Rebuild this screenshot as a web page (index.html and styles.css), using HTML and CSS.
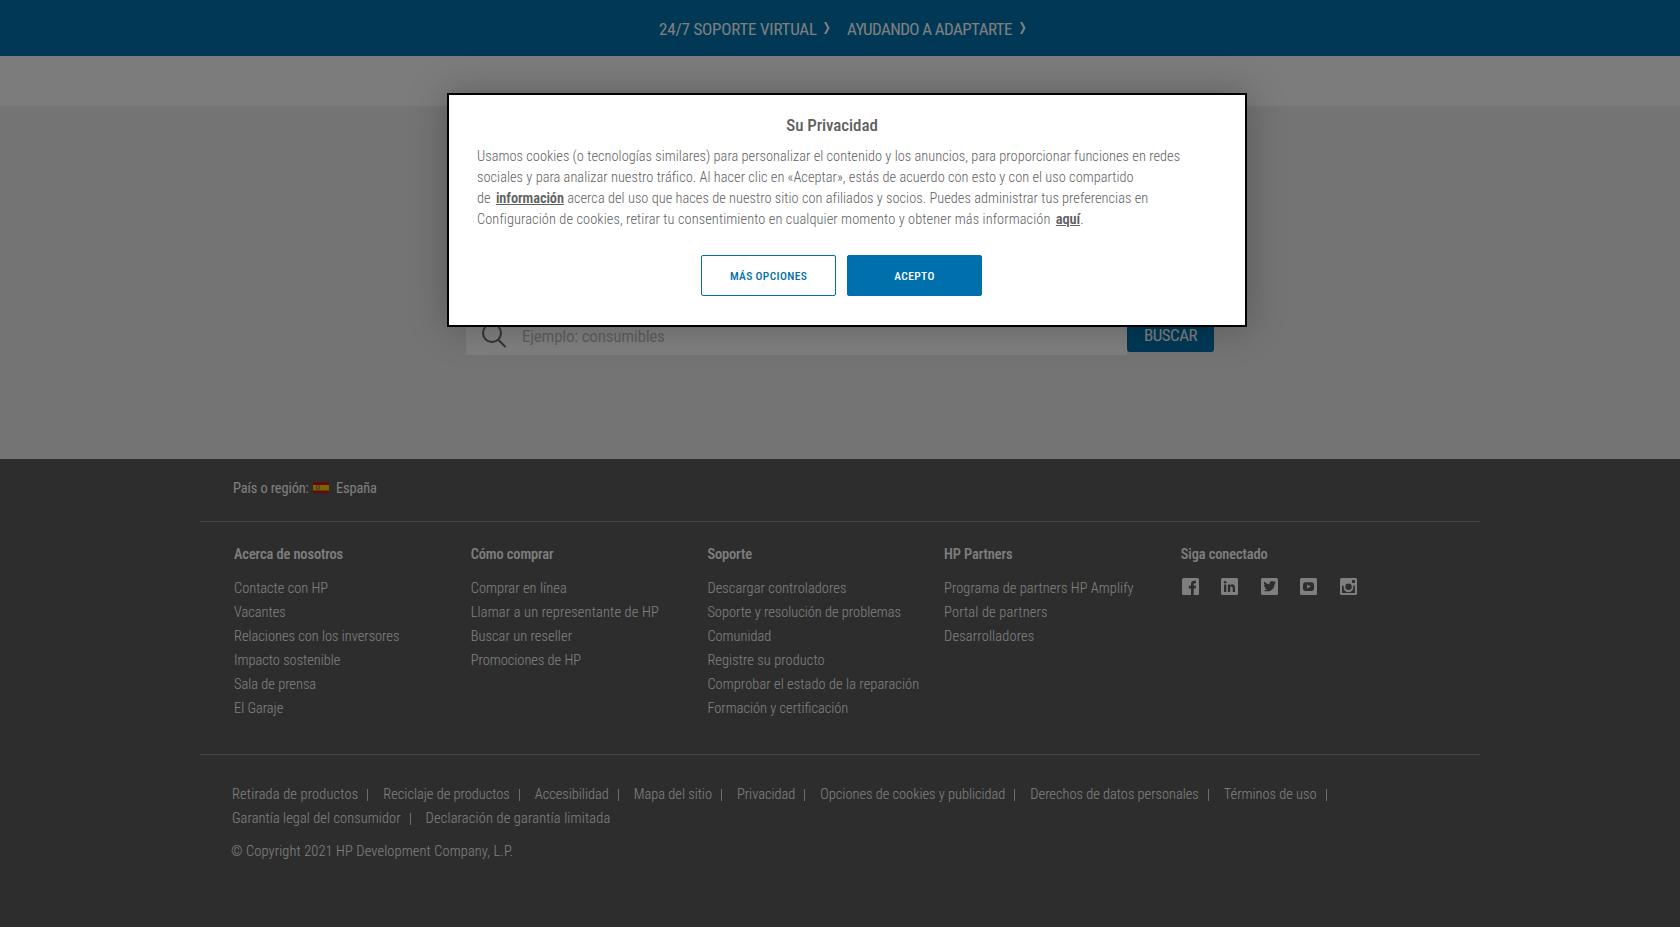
FILE: index.html
```html
<!DOCTYPE html>
<html lang="es">
<head>
<meta charset="utf-8">
<title>HP España</title>
<link rel="stylesheet" href="styles.css">
</head>
<body>
<div class="page">
  <div class="promo">
    <a class="promo-link p1">24/7 SOPORTE VIRTUAL</a>
    <svg class="chev" viewBox="0 0 6 12"><path d="M0 0h2.3L5.6 6 2.3 12H0l3.2-6z"/></svg>
    <a class="promo-link p2">AYUDANDO A ADAPTARTE</a>
    <svg class="chev" viewBox="0 0 6 12"><path d="M0 0h2.3L5.6 6 2.3 12H0l3.2-6z"/></svg>
  </div>
  <header class="header"></header>
  <main class="main">
    <div class="search">
      <div class="field">
        <svg class="lens" viewBox="0 0 26 26"><circle cx="11" cy="11" r="9"/><path d="M17 17.500l7.500 7.500"/></svg>
        <span class="hint">Ejemplo: consumibles</span>
      </div>
      <div class="go">BUSCAR</div>
    </div>
  </main>
  <footer class="footer">
    <div class="region">
      <span class="region-label">País o región:</span>
      <svg class="flag" viewBox="0 0 16 11"><rect width="16" height="11" rx="1" fill="#d0101c"/><rect y="3" width="16" height="5.500" fill="#e8d000"/><rect x="3" y="3.600" width="4" height="4" rx="1" fill="#c4683a"/><rect x="4.300" y="4.600" width="1.600" height="2" fill="#d8c8b0"/></svg>
      <span class="region-name">España</span>
    </div>
    <div class="columns">
      <div class="col">
        <h3 class="head">Acerca de nosotros</h3>
        <a>Contacte con HP</a><a>Vacantes</a><a>Relaciones con los inversores</a><a>Impacto sostenible</a><a>Sala de prensa</a><a>El Garaje</a>
      </div>
      <div class="col">
        <h3 class="head">Cómo comprar</h3>
        <a class="loose">Comprar en línea</a><a class="looser">Llamar a un representante de HP</a><a class="loose">Buscar un reseller</a><a>Promociones de HP</a>
      </div>
      <div class="col">
        <h3 class="head">Soporte</h3>
        <a class="loose">Descargar controladores</a><a>Soporte y resolución de problemas</a><a>Comunidad</a><a class="loose">Registre su producto</a><a class="loose">Comprobar el estado de la reparación</a><a>Formación y certificación</a>
      </div>
      <div class="col">
        <h3 class="head">HP Partners</h3>
        <a class="loose">Programa de partners HP Amplify</a><a class="looser">Portal de partners</a><a class="looser">Desarrolladores</a>
      </div>
      <div class="col">
        <h3 class="head">Siga conectado</h3>
        <div class="social">
          <svg viewBox="0 0 17 17"><rect class="tile" width="17" height="17" rx="1.500"/><path class="ink" d="M9 17v-6.600H6.800V7.800H9V6c0-2.200 1.200-3.200 3.200-3.200h1.800v2.500h-1.300c-.8 0-1 .4-1 1v1.500H14l-.3 2.600h-2V17z"/></svg>
          <svg viewBox="0 0 17 17"><rect class="tile" width="17" height="17" rx="1.500"/><path class="ink" d="M3 6.500h2.300V14H3zM6.900 6.500h2.200v1c1.300-1.900 4.900-1.500 4.900 1.900V14h-2.300V9.900c0-2-2.500-1.800-2.500 0V14H6.900z"/><circle class="ink" cx="4.100" cy="4.200" r="1.300"/></svg>
          <svg viewBox="0 0 17 17"><rect class="tile" width="17" height="17" rx="1.500"/><path class="ink" d="M3.200 3.600c1.400 1.600 3.200 2.500 5.300 2.600-.4-3.100 2.800-4.200 4.500-2.400l1.700-.6-1 1.500 1.300-.2-1.300 1.400c.1 6-6.300 9-11.200 6.500 1.500 0 2.700-.4 3.600-1.100-1.200-.1-2-.7-2.400-1.700h1.100C3.600 9.200 3 8.200 3 7l1.100.2C2.900 6.300 2.600 4.900 3.200 3.600z"/></svg>
          <svg viewBox="0 0 17 17"><rect class="tile" width="17" height="17" rx="1.500"/><rect class="ink" x="3" y="4.300" width="11" height="8.600" rx="2.600"/><path class="tile" d="M7.100 6.600l3.700 2-3.700 2z"/></svg>
          <svg viewBox="0 0 17 17"><rect class="tile" width="17" height="17" rx="1.500"/><path class="ink" d="M2 7.700h1.900a4.900 4.900 0 1 0 9.200 0H15V15H2z"/><circle class="ink" cx="8.500" cy="8.800" r="3.200"/><rect class="ink" x="12" y="2" width="3" height="3" rx=".4"/></svg>
        </div>
      </div>
    </div>
    <div class="legal">
      <div class="legal-row"><a class="looser">Retirada de productos</a><a>Reciclaje de productos</a><a>Accesibilidad</a><a>Mapa del sitio</a><a>Privacidad</a><a>Opciones de cookies y publicidad</a><a>Derechos de datos personales</a><a>Términos de uso</a></div>
      <div class="legal-row"><a class="loose">Garantía legal del consumidor</a><a class="last looser">Declaración de garantía limitada</a></div>
      <p class="copy">© Copyright 2021 HP Development Company, L.P.</p>
    </div>
  </footer>
</div>
<div class="overlay">
  <section class="modal">
    <h2 class="title">Su Privacidad</h2>
    <p class="text">Usamos cookies (o tecnologías similares) para personalizar el contenido y los anuncios, para proporcionar funciones en redes<br>sociales y para analizar nuestro tráfico. Al hacer clic en «Aceptar», estás de acuerdo con esto y con el uso compartido<br>de <a class="more m1">información</a> acerca del uso que haces de nuestro sitio con afiliados y socios. Puedes administrar tus preferencias en<br><span class="wide">Configuración de cookies, retirar tu consentimiento en cualquier momento y obtener más información <a class="more">aquí</a>.</span></p>
    <div class="actions">
      <button class="btn ghost">MÁS OPCIONES</button>
      <button class="btn solid">ACEPTO</button>
    </div>
  </section>
</div>
</body>
</html>
```
FILE: styles.css
```css
* { box-sizing: border-box; }
body {
  margin: 0;
  height: 927px;
  overflow: hidden;
  font-family: "Roboto Condensed", Roboto, sans-serif;
  font-stretch: 75%;
  font-weight: 300;
  font-size: 14.4px;
  color: #fff;
}
h2, h3, p { margin: 0; }
a, span { white-space: nowrap; }

.promo {
  height: 56px;
  background: #0070ad;
  display: flex;
  align-items: center;
  padding: 1px 0 0 659px;
  font-size: 17px;
  font-weight: 400;
}
.p1 { width: 165px; letter-spacing: -.2px; }
.p2 { width: 173px; letter-spacing: -.57px; }
.chev { width: 6px; height: 12px; fill: #fff; margin-bottom: 1px; }
.chev + .promo-link { margin-left: 17px; }
.header { height: 50px; background: #f8f8f8; }
.main { height: 353px; background: #e8e8e8; padding: 207px 0 0 466px; }
.search { display: flex; align-items: flex-start; }
.field {
  width: 661px;
  height: 42px;
  background: #fff;
  display: flex;
  align-items: center;
  padding: 4px 0 0 15px;
  font-size: 17px;
  color: #bcbcbc;
  font-weight: 400;
}
.hint { letter-spacing: -.22px; }
.lens { width: 26px; height: 26px; fill: none; stroke: #666; stroke-width: 2; margin-right: 15px; margin-top: -2px; }
.go {
  width: 87px;
  height: 39px;
  background: #0070ad;
  border-radius: 3px;
  text-align: center;
  font-size: 17px;
  line-height: 45px;
  font-weight: 400;
  letter-spacing: -.5px;
}

.footer { height: 468px; background: #5a5a5a; padding: 0 200px; }
.region {
  height: 63px;
  border-bottom: 1px solid #888;
  display: flex;
  align-items: flex-start;
  padding: 18px 0 0 33px;
  line-height: 24px;
  font-weight: 400;
  letter-spacing: -.12px;
}
.region-label { width: 80px; }
.flag { width: 16px; height: 11px; margin: 5px 7px 0 0; }
.columns {
  display: grid;
  grid-template-columns: repeat(5, 236.7px);
  height: 233px;
  padding: 21px 0 0 34px;
  border-bottom: 1px solid #888;
}
.col { display: flex; flex-direction: column; line-height: 24px; }
.head { font-size: 14.4px; font-weight: 500; line-height: 24px; margin-bottom: 10px; letter-spacing: -.1px; }
.loose { letter-spacing: .08px; }
.looser { letter-spacing: .17px; }
.social { display: flex; gap: 22.5px; padding-top: 1px; padding-left: 1px; }
.social svg { width: 17px; height: 17px; }
.tile { fill: #fff; }
.ink { fill: #5a5a5a; }
.legal { padding: 28px 0 0 32px; line-height: 24px; }
.legal-row { display: flex; }
.legal-row a { margin-right: 15px; display: flex; align-items: center; }
.legal-row a::after { content: ""; width: 1px; height: 12px; margin-left: 9px; background: #ddd; }
.legal-row .last::after { display: none; }
.copy { margin-top: 9px; margin-left: -1px; letter-spacing: .13px; }

.overlay {
  position: absolute;
  inset: 0;
  background: rgba(0, 0, 0, .5);
  padding: 93px 0 0 447px;
}
.modal {
  width: 800px;
  height: 234px;
  border: 2px solid #000;
  background: #fff;
  box-shadow: 0 0 36px rgba(0, 0, 0, .25);
  color: #606060;
  padding: 19px 28px 0;
}
.title { font-size: 17px; line-height: 22px; font-weight: 500; text-align: center; padding-right: 30px; letter-spacing: -.08px; }
.text { margin-top: 10px; line-height: 21px; white-space: nowrap; letter-spacing: .02px; }
.wide { letter-spacing: .085px; }
.more { font-weight: 600; text-decoration: underline; margin-left: 2px; letter-spacing: -.1px; }
.actions { display: flex; gap: 11px; padding: 25px 0 0 224px; }
.btn {
  width: 135px;
  height: 41px;
  border: 1px solid #0070ad;
  border-radius: 2px;
  padding: 0;
  font: inherit;
  font-size: 11.5px;
  font-weight: 500;
  letter-spacing: .35px;
}
.ghost { background: #fff; color: #0070ad; }
.solid { background: #0070ad; color: #fff; }
```
